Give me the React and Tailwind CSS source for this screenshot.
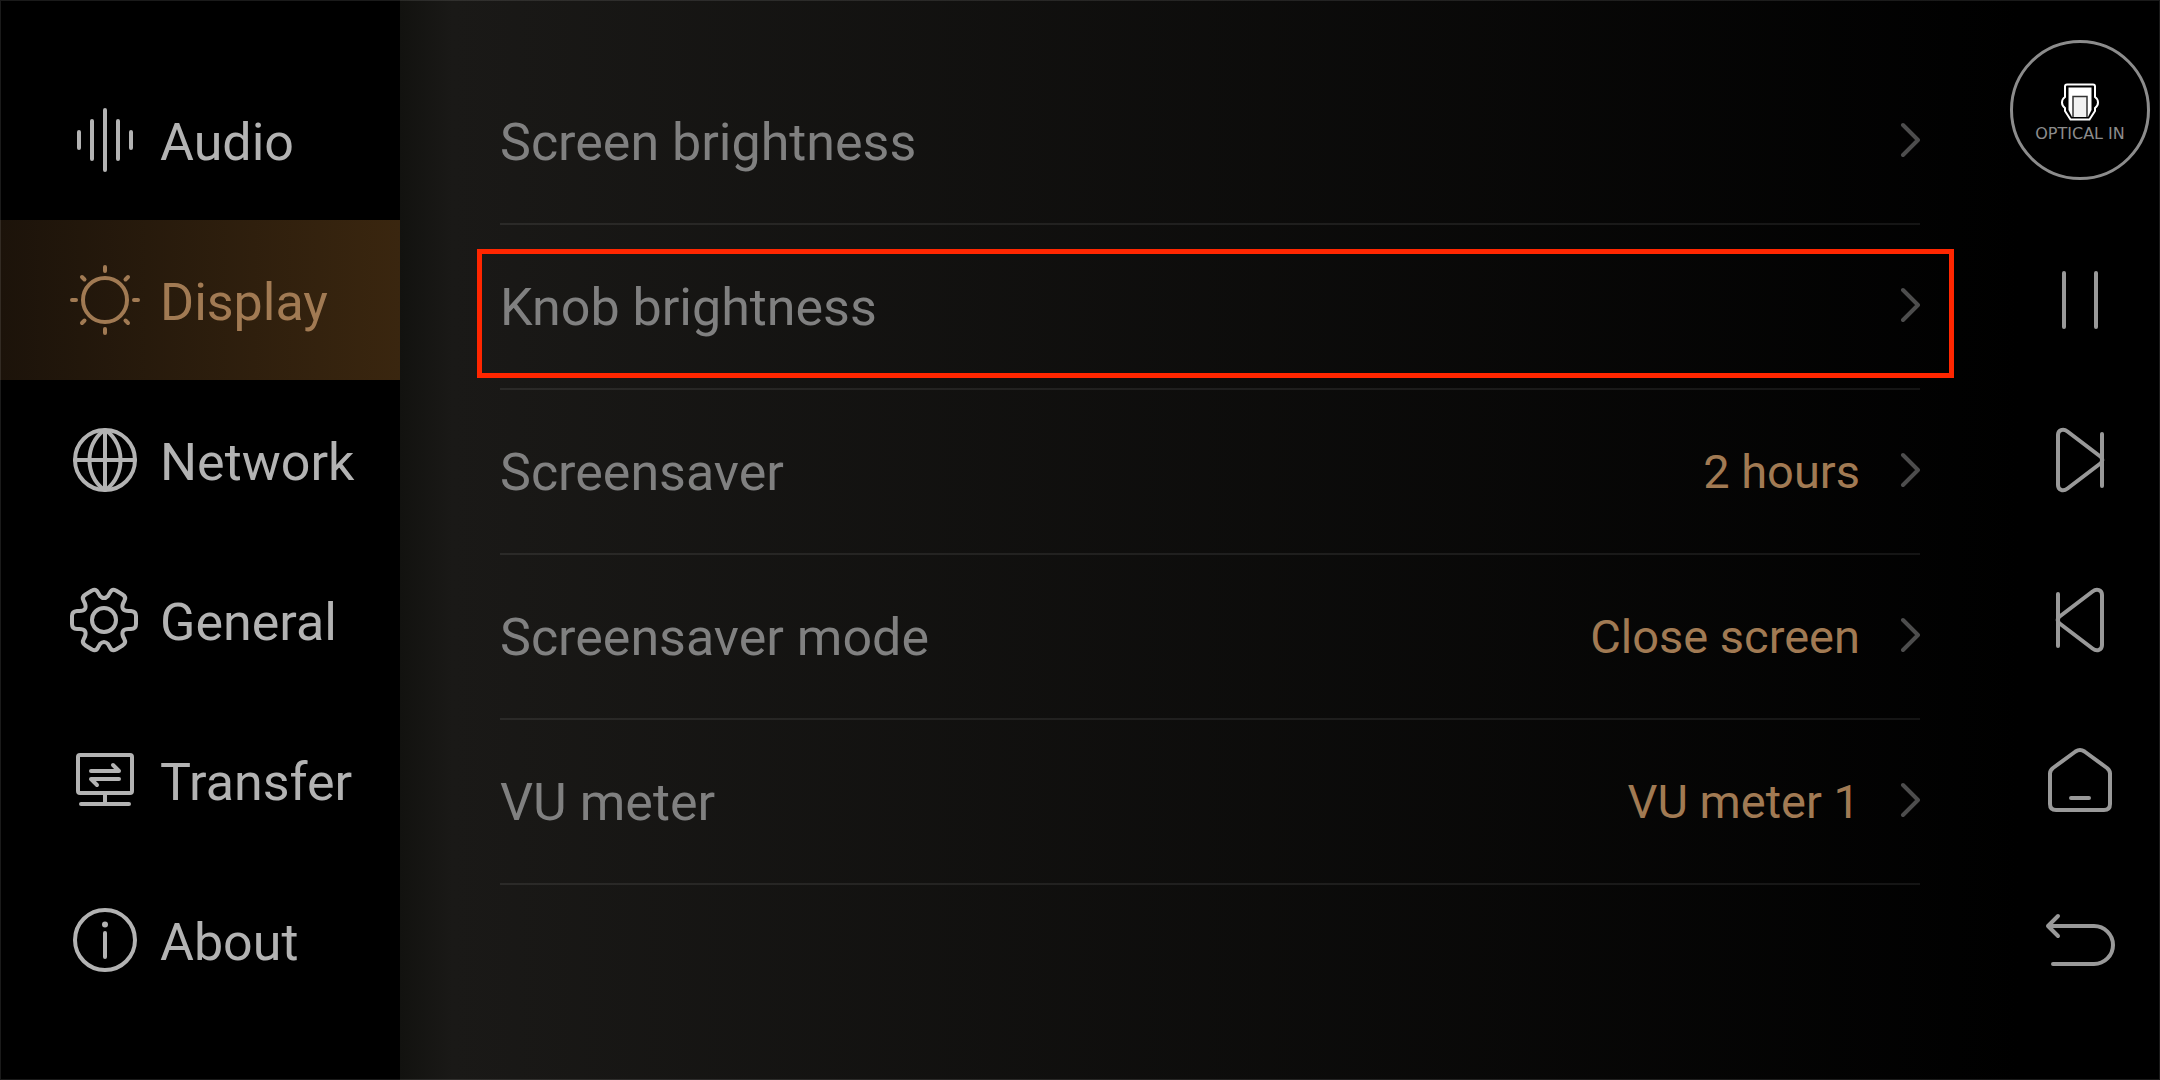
function Icon({ children }) {
  return (
    <svg
      className="h-20 w-20 shrink-0"
      viewBox="0 0 80 80"
      fill="none"
      stroke="currentColor"
      strokeWidth={4}
      strokeLinecap="round"
      strokeLinejoin="round"
      aria-hidden="true"
    >
      {children}
    </svg>
  )
}

const navItems = [
  {
    label: 'Audio',
    icon: <path d="M14 32v16M27 21v38M40 10v60M53 21v38M66 32v16" />,
  },
  {
    label: 'Display',
    active: true,
    icon: (
      <>
        <circle cx="40" cy="40" r="22" />
        <path d="M40 7v4M40 69v4M7 40h4M69 40h4M17 17l2.5 2.5M60.5 60.5l2.5 2.5M17 63l2.5-2.5M60.5 19.5l2.5-2.5" />
      </>
    ),
  },
  {
    label: 'Network',
    icon: (
      <>
        <circle cx="40" cy="40" r="30" />
        <path d="M10 40h60M40 10v60M38 11C20 26 20 54 38 69M42 11C60 26 60 54 42 69" />
      </>
    ),
  },
  {
    label: 'General',
    icon: (
      <>
        <circle cx="39" cy="40" r="12" />
        <path d="M35 16L33 12.5Q31 8.5 27 10.5L20.5 14.5Q16.5 17 18.5 20.5L20 23.5Q22.5 31 14.5 31H12Q7 31.5 7 36V44Q7 49 12 49H14.5Q22.5 49 20 56.5L18.5 59.5Q16.5 63 20.5 65.5L27 69.5Q31 71.5 33 67.5L35 64Q39 60 43 64L45 67.5Q47 71.5 51 69.5L57.5 65.5Q61.5 63 59.5 59.5L58 56.5Q55.5 49 63.5 49H66Q71 49 71 44V36Q71 31.5 66 31H63.5Q55.5 31 58 23.5L59.5 20.5Q61.5 17 57.5 14.5L51 10.5Q47 8.5 45 12.5L43 16Q39 20 35 16Z" />
      </>
    ),
  },
  {
    label: 'Transfer',
    icon: (
      <>
        <rect x="13" y="15" width="54" height="38" rx="2" />
        <path d="M26 31h28l-6-6M54 39H26l6 6M40 53v11M16 64h48" />
      </>
    ),
  },
  {
    label: 'About',
    icon: (
      <>
        <circle cx="40" cy="40" r="30" />
        <path d="M40 33v24" />
        <circle cx="40" cy="24.5" r="3" fill="currentColor" stroke="none" />
      </>
    ),
  },
]

const settings = [
  { label: 'Screen brightness' },
  { label: 'Knob brightness', highlighted: true },
  { label: 'Screensaver', value: '2 hours' },
  { label: 'Screensaver mode', value: 'Close screen' },
  { label: 'VU meter', value: 'VU meter 1' },
]

const controls = [
  { label: 'Pause', icon: <path d="M24 13v54M56 13v54" /> },
  {
    label: 'Next track',
    icon: <path d="M18 15C18 10 23 8 27.5 11.5L61 37Q63.5 40 61 43L27.5 68.5C23 72 18 70 18 65ZM62 14v52" />,
  },
  {
    label: 'Previous track',
    icon: <path d="M62 15C62 10 57 8 52.5 11.5L19 37Q16.5 40 19 43L52.5 68.5C57 72 62 70 62 65ZM18 14v52" />,
  },
  {
    label: 'Home',
    icon: (
      <path d="M35.5 11.5Q40 8.5 44.5 11.5L67 28Q70 30.5 70 33.5V64Q70 70 64 70H16Q10 70 10 64V33.5Q10 30.5 13 28ZM31 58h18" />
    ),
  },
  { label: 'Back', icon: <path d="M18 16L8 26l10 10M8 26h46a19 19 0 0 1 0 38H13" /> },
]

function Sidebar() {
  return (
    <nav className="w-[400px] shrink-0 bg-black pt-[60px]">
      {navItems.map((item) => (
        <a
          key={item.label}
          href={`#${item.label.toLowerCase()}`}
          aria-current={item.active ? 'page' : undefined}
          className={
            item.active
              ? 'flex h-40 items-center gap-[15px] bg-linear-to-r/srgb from-[#1c130a] to-[#3a260f] pl-[65px] text-[#a17a53]'
              : 'flex h-40 items-center gap-[15px] pl-[65px] text-[#b3b3b3]'
          }
        >
          <Icon>{item.icon}</Icon>
          <span className="pt-1.5 text-[52px] leading-[60px]">{item.label}</span>
        </a>
      ))}
    </nav>
  )
}

function SettingRow({ label, value, highlighted }) {
  return (
    <li className="relative border-b-2 border-white/8">
      <button type="button" className="flex h-[163px] w-full items-center pb-1 text-left">
        <span className="grow pt-1.5 text-[52px] leading-[60px] text-[#808080]">{label}</span>
        {value && <span className="pt-1 text-[47px] leading-[60px] text-[#a17a53]">{value}</span>}
        <svg
          className="ml-10 h-9 w-5 shrink-0 text-[#4d4d4d]"
          viewBox="0 0 20 36"
          fill="none"
          stroke="currentColor"
          strokeWidth={4}
          strokeLinecap="round"
          strokeLinejoin="round"
          aria-hidden="true"
        >
          <path d="M3 3l15 15L3 33" />
        </svg>
      </button>
      {highlighted && (
        <div className="pointer-events-none absolute top-6 -right-[34px] bottom-[10px] -left-[23px] border-5 border-[#ff2600]" />
      )}
    </li>
  )
}

function ControlBar() {
  return (
    <aside className="flex w-40 shrink-0 flex-col items-center pt-10">
      {/* Current input source */}
      <button
        type="button"
        className="mb-10 flex h-[140px] w-[140px] flex-col items-center rounded-full border-3 border-[#8c8c8c] bg-black pt-10"
      >
        <svg className="h-[38px] w-[38px]" viewBox="0 0 38 38" fill="none" aria-hidden="true">
          <path
            d="M6 1.5H32Q34 1.5 34 3.5V14Q37 16 37 19.5T34 25V28L28.5 36.5H9.5L4 28V25Q1 23 1 19.5T4 14V3.5Q4 1.5 6 1.5Z"
            stroke="#fff"
            strokeWidth="2"
          />
          <path d="M7.5 4.5H30.5V27L27 34H11L7.500 27Z" fill="#fff" />
          <path d="M12 34V13.5H26V34" fill="#f2f2f2" stroke="#333" strokeWidth="1.5" />
        </svg>
        <span className="font-['DejaVu_Sans',sans-serif] text-[16px] leading-[26px] whitespace-nowrap text-[#8c8c8c]">
          OPTICAL IN
        </span>
      </button>
      {controls.map((control) => (
        <button
          key={control.label}
          type="button"
          aria-label={control.label}
          className="flex h-40 w-40 items-center justify-center text-[#999]"
        >
          <Icon>{control.icon}</Icon>
        </button>
      ))}
    </aside>
  )
}

export default function App() {
  return (
    <div className="relative flex min-h-screen bg-black font-[Roboto,sans-serif]">
      <Sidebar />
      <div className="flex grow bg-linear-to-r/srgb from-[#12120f] via-[#1a1917] via-3% to-black to-92%">
        <main className="grow pt-[60px] pr-20 pl-[100px]">
          <ul>
            {settings.map((row) => (
              <SettingRow key={row.label} {...row} />
            ))}
          </ul>
        </main>
        <ControlBar />
      </div>
      {/* Hairline around the whole panel */}
      <div className="pointer-events-none absolute inset-0 border border-white/10" />
    </div>
  )
}
